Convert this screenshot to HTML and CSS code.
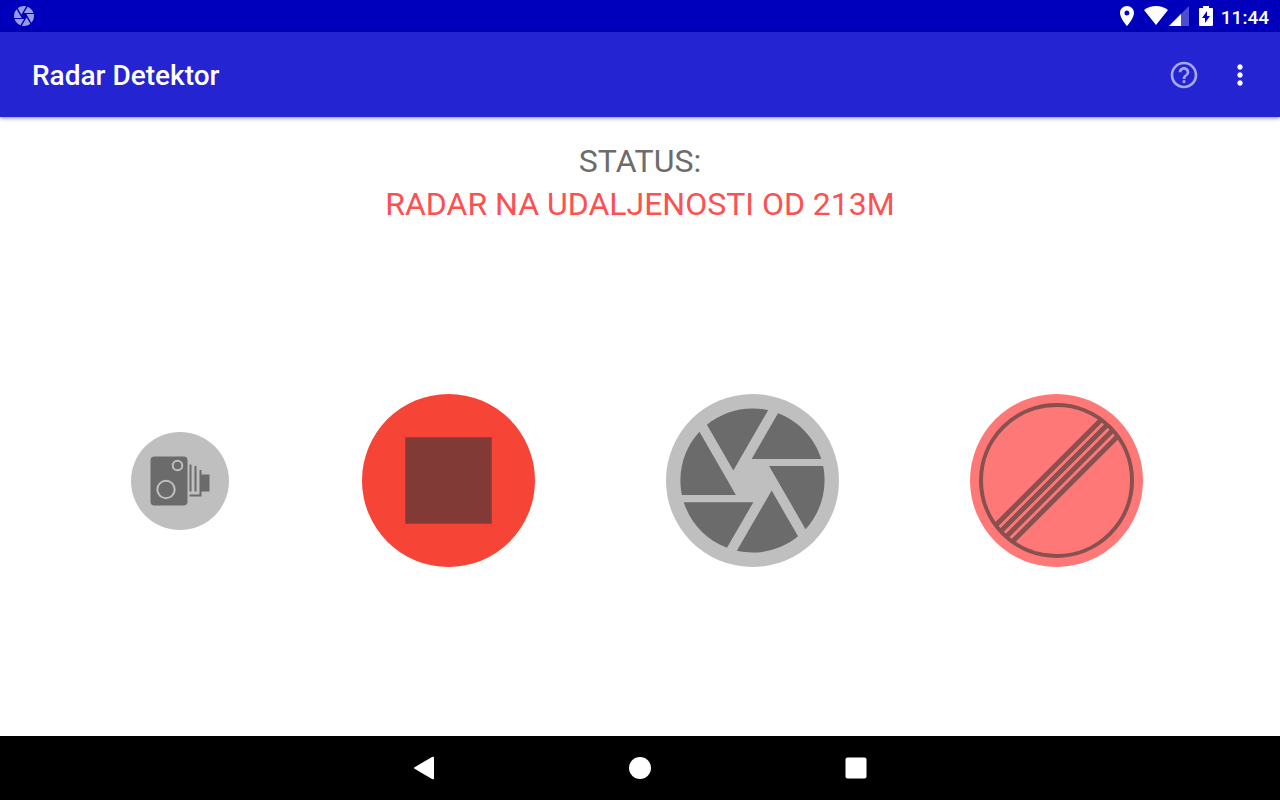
FILE: index.html
```html
<!DOCTYPE html>
<html lang="hr">
<head>
    <meta charset="UTF-8">
    <meta name="viewport" content="width=device-width, initial-scale=1.0">
    <title>Radar Detektor</title>
    <link rel="stylesheet" href="styles.css">
</head>
<body>

<!-- Status bar -->
<div class="status-bar">
    <svg class="status-app" viewBox="0 0 24 24"><path d="M9.4 10.5l4.77-8.26C13.47 2.09 12.75 2 12 2c-2.4 0-4.6.85-6.32 2.25l3.66 6.35.06-.1zM21.54 9c-.92-2.92-3.15-5.26-6-6.34L11.88 9h9.66zm.26 1h-7.49l.29.5 4.76 8.25C20.97 17.01 22 14.62 22 12c0-.69-.07-1.35-.2-2zM8.54 12l-3.9-6.75C3.01 7.03 2 9.39 2 12c0 .69.07 1.35.2 2h7.49l-1.15-2zm-6.08 3c.92 2.92 3.15 5.26 6 6.34L12.12 15H2.46zm11.27 0l-3.9 6.76c.7.15 1.42.24 2.17.24 2.4 0 4.6-.85 6.32-2.25l-3.66-6.35-.93 1.6z"/></svg>
    <div class="status-icons">
        <svg width="14" height="20" viewBox="0 0 14 20"><path fill-rule="evenodd" d="M7 0C3.100 0 0 3.100 0 7c0 5.200 7 13 7 13s7-7.800 7-13c0-3.900-3.100-7-7-7zm0 9.500a2.500 2.500 0 1 1 0-5 2.500 2.500 0 0 1 0 5z"/></svg>
        <svg class="wifi" width="24" height="20" viewBox="0 0 24 20"><path d="M0 4C3.500 1.500 7.500 0 12 0s8.500 1.500 12 4L12 19z"/></svg>
        <svg class="signal" width="20" height="20" viewBox="0 0 20 20"><path opacity=".3" d="M0 20L20 0v20z"/><path d="M0 20L12 8v12z"/></svg>
        <svg class="battery" width="14" height="20" viewBox="0 0 14 20"><path fill-rule="evenodd" d="M4 0h6v2h3q1 0 1 1v16q0 1-1 1H1q-1 0-1-1V3q0-1 1-1h3zM8 5l-5 7h3v5l5-7H8z"/></svg>
        <span class="clock">11:44</span>
    </div>
</div>

<!-- App bar -->
<header class="app-bar">
    <h1>Radar Detektor</h1>
    <button class="icon-button help" aria-label="Pomoć">
        <svg viewBox="0 0 24 24"><path d="M11 18h2v-2h-2v2zm1-16C6.480 2 2 6.480 2 12s4.480 10 10 10 10-4.480 10-10S17.520 2 12 2zm0 18c-4.410 0-8-3.590-8-8s3.590-8 8-8 8 3.590 8 8-3.590 8-8 8zm0-14c-2.210 0-4 1.790-4 4h2c0-1.100.9-2 2-2s2 .9 2 2c0 2-3 1.750-3 5h2c0-2.250 3-2.500 3-5 0-2.210-1.790-4-4-4z"/></svg>
    </button>
    <button class="icon-button" aria-label="Više opcija">
        <svg viewBox="0 0 24 24"><path d="M12 8c1.100 0 2-.9 2-2s-.9-2-2-2-2 .9-2 2 .9 2 2 2zm0 2c-1.100 0-2 .9-2 2s.9 2 2 2 2-.9 2-2-.9-2-2-2zm0 6c-1.100 0-2 .9-2 2s.9 2 2 2 2-.9 2-2-.9-2-2-2z"/></svg>
    </button>
</header>

<main>
    <div class="status">
        <p>STATUS:</p>
        <p class="alert">RADAR NA UDALJENOSTI OD 213M</p>
    </div>

    <div class="controls">
        <button class="round small" aria-label="Dodaj radar">
            <svg viewBox="0 0 98 98">
                <rect x="19.500" y="24.500" width="37" height="49" rx="4"/>
                <circle class="ring" cx="46.500" cy="33.500" r="4.800"/>
                <circle class="ring" cx="35" cy="57.500" r="8.700"/>
                <path d="M58.500 32.500h2v27h-2zM63.500 34h2v25.500h-2zM68.500 38h2v26.500h-12v-2h10zM70.500 42.500h8v17h-8z"/>
            </svg>
        </button>
        <button class="round stop" aria-label="Zaustavi">
            <svg viewBox="0 0 24 24"><path d="M6 6h12v12H6z"/></svg>
        </button>
        <button class="round" aria-label="Kamera">
            <svg viewBox="0 0 24 24"><path d="M9.4 10.5l4.77-8.26C13.47 2.09 12.75 2 12 2c-2.4 0-4.6.85-6.32 2.25l3.66 6.35.06-.1zM21.54 9c-.92-2.92-3.15-5.26-6-6.34L11.88 9h9.66zm.26 1h-7.49l.29.5 4.76 8.25C20.97 17.01 22 14.62 22 12c0-.69-.07-1.35-.2-2zM8.54 12l-3.9-6.75C3.01 7.03 2 9.39 2 12c0 .69.07 1.35.2 2h7.49l-1.15-2zm-6.08 3c.92 2.92 3.15 5.26 6 6.34L12.12 15H2.46zm11.27 0l-3.9 6.76c.7.15 1.42.24 2.17.24 2.4 0 4.6-.85 6.32-2.25l-3.66-6.35-.93 1.6z"/></svg>
        </button>
        <button class="round end" aria-label="Kraj ograničenja">
            <svg viewBox="0 0 173 173">
                <circle cx="86.500" cy="86.500" r="75.500"/>
                <path class="stripes" d="M26 131L131 26M31 137L137 31M36 143L143 36M42 148L148 42"/>
            </svg>
        </button>
    </div>
</main>

<!-- System navigation -->
<nav class="nav-bar">
    <button class="icon-button" aria-label="Natrag"><svg viewBox="0 0 32 32"><path d="M7 15L24 5q2-1 2 1v20q0 2-2 1L7 17q-2-1 0-2z"/></svg></button>
    <button class="icon-button" aria-label="Početna"><svg viewBox="0 0 32 32"><circle cx="16" cy="16" r="11"/></svg></button>
    <button class="icon-button" aria-label="Nedavno"><svg viewBox="0 0 32 32"><rect x="5.500" y="5.500" width="21" height="21" rx="2"/></svg></button>
</nav>

</body>
</html>
```
FILE: styles.css
```css
* {
    box-sizing: border-box;
}
body {
    margin: 0;
    min-height: 100vh;
    display: flex;
    flex-direction: column;
    font-family: Roboto, sans-serif;
    background-color: #fff;
}
button {
    padding: 0;
    border: none;
    cursor: pointer;
}
svg {
    display: block;
}
.status-bar {
    display: flex;
    align-items: center;
    justify-content: space-between;
    height: 32px;
    padding: 0 11px 0 12px;
    background-color: #0000bc;
    color: #fff;
    fill: #fff;
}
.status-app {
    width: 24px;
    height: 24px;
    opacity: 0.6;
}
.status-icons {
    display: flex;
    align-items: center;
}
.wifi {
    margin-left: 10px;
}
.signal {
    margin-left: 1px;
}
.battery {
    margin-left: 10px;
}
.clock {
    margin-left: 8px;
    padding-top: 2px;
    font-size: 19px;
    font-weight: 500;
}
.app-bar {
    display: flex;
    align-items: center;
    gap: 24px;
    height: 85px;
    padding: 0 24px 0 32px;
    background-color: #2424d2;
    box-shadow: 0 1px 4px rgba(0, 0, 0, 0.5);
    color: #fff;
}
.app-bar h1 {
    flex: 1;
    margin: 0;
    padding-top: 2px;
    font-size: 28px;
    font-weight: 500;
}
.icon-button {
    width: 32px;
    height: 32px;
    background: none;
    fill: #fff;
}
.help {
    opacity: 0.6;
}
main {
    flex: 1;
    display: flex;
    flex-direction: column;
    padding: 23px 72px 0 64px;
}
.status {
    padding-left: 8px;
    text-align: center;
    font-size: 32px;
    line-height: 43px;
    color: #6c6c6c;
}
.status p {
    margin: 0;
}
.status .alert {
    color: #ff5050;
}
.controls {
    flex: 1;
    display: grid;
    grid-template-columns: 232fr 304fr 304fr 304fr;
    align-items: center;
    justify-items: center;
    padding-bottom: 1px;
}
.round {
    width: 173px;
    height: 173px;
    border-radius: 50%;
    background-color: #bfbfbf;
    fill: #6b6b6b;
}
.small {
    width: 98px;
    height: 98px;
}
.ring {
    fill: none;
    stroke: #bfbfbf;
    stroke-width: 2;
}
.stop {
    background-color: #f64437;
    fill: #823a37;
}
.end {
    background-color: #ff7878;
    fill: none;
    stroke: #895050;
    stroke-width: 4;
}
.stripes {
    stroke-width: 5;
}
.nav-bar {
    display: flex;
    align-items: center;
    justify-content: center;
    gap: 184px;
    height: 64px;
    background-color: #000;
}
```
